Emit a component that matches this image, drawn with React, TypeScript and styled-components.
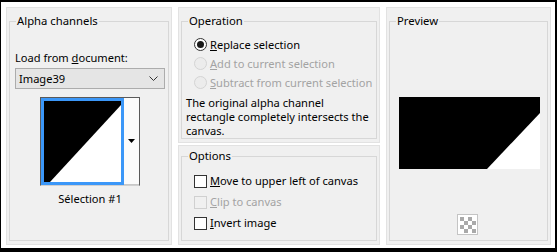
import React from "react";
import styled, { createGlobalStyle } from "styled-components";

const Global = createGlobalStyle`
  html, body { margin: 0; padding: 0; background: #fff; }
  * { box-sizing: border-box; }
`;

const Dialog = styled.div`
  width: 557px;
  height: 252px;
  background: #fff;
  border-style: solid;
  border-color: #000;
  border-width: 2px 2px 4px 1px;
  padding: 5px 4px 3px 5px;
  display: flex;
  gap: 6px;
  font-family: "Noto Sans", "Open Sans", sans-serif;
  font-size: 11.1px;
  color: #000;
`;

const Column = styled.div`
  display: flex;
  flex-direction: column;
  gap: 2px;
  width: ${(p: { w: number }) => p.w}px;
`;

const Panel = styled.div<{ w?: number; h?: number; pt?: number }>`
  background: #f0f0f0;
  border: 1px solid #e2e2e2;
  padding: ${(p) => p.pt ?? 5}px 2px 3px 2px;
  ${(p) => (p.w ? `width: ${p.w}px;` : "")}
  ${(p) => (p.h ? `height: ${p.h}px;` : "")}
  display: flex;
`;

const Group = styled.fieldset<{ pt: number; pl?: number }>`
  flex: 1;
  margin: 0;
  min-width: 0;
  border: 1px solid #d7d7d7;
  padding: ${(p) => p.pt}px 0 0 ${(p) => p.pl ?? 0}px;
  display: flex;
  flex-direction: column;
`;

const Legend = styled.legend`
  margin-left: 6px;
  padding: 0 1px;
  line-height: 16px;
  font-size: 11.3px;
`;

const Label = styled.div`
  line-height: 16px;
  padding-left: 5px;
`;

const Combo = styled.div`
  margin: 2px 0 0 5px;
  width: 150px;
  height: 21px;
  border: 1px solid #acacac;
  background: #e5e5e5;
  display: flex;
  align-items: center;
  justify-content: space-between;
  padding: 0 6px 0 3px;
  line-height: 16px;
`;

const ThumbFrame = styled.div`
  margin: 8px 0 0 30px;
  width: 100px;
  height: 89px;
  border: 1px solid #5a5a5a;
  border-bottom-color: #d0d0d0;
  display: flex;
  background: #fff;
`;

const ThumbSel = styled.div`
  width: 83px;
  height: 87px;
  border: 3px solid #3b97f8;
  background: #000;
  display: flex;
`;

const ThumbArrow = styled.div`
  flex: 1;
  display: flex;
  align-items: center;
  justify-content: center;
  background: #fbfbfb;
  border-bottom: 1px solid #c8c8c8;
`;

const Caption = styled.div`
  margin-top: 5px;
  width: 100px;
  margin-left: 30px;
  text-align: center;
  line-height: 16px;
`;

const Row = styled.div<{ h: number; disabled?: boolean }>`
  height: ${(p) => p.h}px;
  display: flex;
  align-items: center;
  padding-left: 12px;
  gap: 2px;
  color: ${(p) => (p.disabled ? "#a3a3a3" : "#000")};
  line-height: 16px;
  white-space: nowrap;
`;

const Radio = styled.span<{ checked?: boolean; disabled?: boolean }>`
  width: 13px;
  height: 13px;
  border-radius: 50%;
  border: 1px solid ${(p) => (p.disabled ? "#d4d4d4" : "#333")};
  background: ${(p) => (p.disabled ? "#ececec" : "#fff")};
  display: flex;
  align-items: center;
  justify-content: center;
  margin-right: 1px;
  &::after {
    content: "";
    width: 7px;
    height: 7px;
    border-radius: 50%;
    background: #1a1a1a;
    display: ${(p) => (p.checked ? "block" : "none")};
  }
`;

const Check = styled.span<{ disabled?: boolean }>`
  width: 13px;
  height: 13px;
  border: 1px solid ${(p) => (p.disabled ? "#d0d0d0" : "#333")};
  background: ${(p) => (p.disabled ? "#f0f0f0" : "#fff")};
  margin-right: 1px;
`;

const Note = styled.p`
  margin: 3.5px 0 0 0;
  padding-left: 4px;
  line-height: 14px;
  white-space: nowrap;
`;

const PreviewBox = styled.div`
  align-self: center;
  width: 141px;
  height: 72px;
  background: #000;
  margin-left: 1px;
`;

const Checker = styled.div`
  align-self: center;
  margin-top: 45px;
  width: 21px;
  height: 21px;
  margin-left: -2px;
`;

export default function App() {
  return (
    <>
      <Global />
      <Dialog>
        <Panel w={166}>
          <Group pt={21}>
            <Legend>Alpha channels</Legend>
            <Label>
              Load from <u>d</u>ocument:
            </Label>
            <Combo>
              <span>Image39</span>
              <svg width="9" height="5" viewBox="0 0 9 5">
                <path d="M0.5 0.5 L4.5 4.5 L8.5 0.5" fill="none" stroke="#333" strokeWidth="1" />
              </svg>
            </Combo>
            <ThumbFrame>
              <ThumbSel>
                <svg width="77" height="81" viewBox="0 0 77 81">
                  <rect width="77" height="81" fill="#000" />
                  <polygon points="77,4 77,81 6,81" fill="#fff" />
                </svg>
              </ThumbSel>
              <ThumbArrow>
                <svg width="7" height="4" viewBox="0 0 7 4">
                  <polygon points="0,0 7,0 3.5,4" fill="#000" />
                </svg>
              </ThumbArrow>
            </ThumbFrame>
            <Caption>Sélection #1</Caption>
          </Group>
        </Panel>
        <Column w={202}>
          <Panel h={136}>
            <Group pt={6}>
              <Legend>Operation</Legend>
              <Row h={19.5}>
                <Radio checked />
                <span>
                  <u>R</u>eplace selection
                </span>
              </Row>
              <Row h={19.5} disabled>
                <Radio disabled />
                <span>
                  <u>A</u>dd to current selection
                </span>
              </Row>
              <Row h={19.5} disabled>
                <Radio disabled />
                <span>
                  <u>S</u>ubtract from current selection
                </span>
              </Row>
              <Note>
                The original alpha channel
                <br />
                rectangle completely intersects the
                <br />
                canvas.
              </Note>
            </Group>
          </Panel>
          <Panel h={100} pt={2}>
            <Group pt={6.5}>
              <Legend>Options</Legend>
              <Row h={21}>
                <Check />
                <span>
                  <u>M</u>ove to upper left of canvas
                </span>
              </Row>
              <Row h={21} disabled>
                <Check disabled />
                <span>
                  <u>C</u>lip to canvas
                </span>
              </Row>
              <Row h={21}>
                <Check />
                <span>
                  <u>I</u>nvert image
                </span>
              </Row>
            </Group>
          </Panel>
        </Column>
        <Panel w={165}>
          <Group pt={68}>
            <Legend>Preview</Legend>
            <PreviewBox>
              <svg width="141" height="72" viewBox="0 0 141 72">
                <rect width="141" height="72" fill="#000" />
                <polygon points="141,16 141,72 88,72" fill="#fff" />
              </svg>
            </PreviewBox>
            <Checker>
              <svg width="21" height="21" viewBox="0 0 21 21">
                <rect x="0.5" y="0.5" width="20" height="20" fill="#fff" stroke="#c4c4c4" />
                {[0, 1, 2, 3].map((r) =>
                  [0, 1, 2, 3].map((c) =>
                    (r + c) % 2 === 0 ? (
                      <rect key={`${r}-${c}`} x={3 + c * 4} y={3 + r * 4} width="4" height="4" fill="#a9a9a9" />
                    ) : null
                  )
                )}
              </svg>
            </Checker>
          </Group>
        </Panel>
      </Dialog>
    </>
  );
}
